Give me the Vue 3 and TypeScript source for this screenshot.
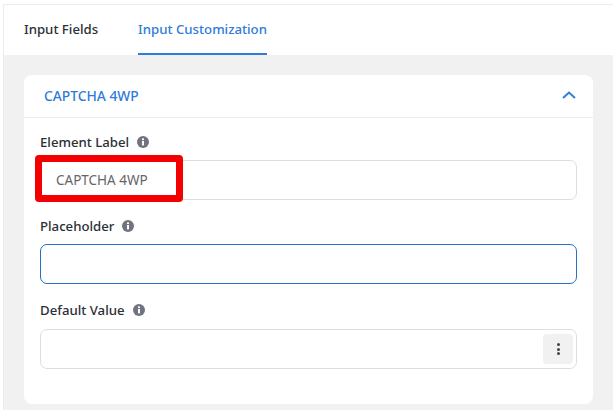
<script setup lang="ts">
interface Field {
  label: string
  value: string
  focused?: boolean
  menu?: boolean
}

const fields: Field[] = [
  { label: 'Element Label', value: 'CAPTCHA 4WP' },
  { label: 'Placeholder', value: '', focused: true },
  { label: 'Default Value', value: '', menu: true },
]
</script>

<template>
  <div class="page">
    <div class="tabs">
      <div class="tab">Input Fields</div>
      <div class="tab active">Input Customization</div>
    </div>
    <div class="content">
      <section class="card">
        <header class="card-head">
          <span class="card-title">CAPTCHA 4WP</span>
          <svg class="chevron" width="14" height="8" viewBox="0 0 14 8" fill="none">
            <path d="M1 7 L7 1.5 L13 7" stroke="#2f7bd9" stroke-width="1.9" />
          </svg>
        </header>
        <div class="card-body">
          <div v-for="f in fields" :key="f.label" class="field">
            <div class="label">
              <span>{{ f.label }}</span>
              <svg class="info" width="12" height="12" viewBox="0 0 12 12">
                <circle cx="6" cy="6" r="6" fill="#6f7480" />
                <rect x="5" y="5" width="2" height="4.4" fill="#fff" />
                <rect x="5" y="2.4" width="2" height="1.7" fill="#fff" />
              </svg>
            </div>
            <div class="input" :class="{ focused: f.focused }">
              <span class="value">{{ f.value }}</span>
              <button v-if="f.menu" class="menu" type="button" aria-label="More">
                <i></i><i></i><i></i>
              </button>
            </div>
          </div>
        </div>
      </section>
    </div>
    <div class="highlight"></div>
  </div>
</template>

<style>
html, body { margin: 0; background: #fff; }
</style>

<style scoped>
.page {
  position: relative;
  width: 613px;
  height: 410px;
  overflow: hidden;
  box-sizing: border-box;
  padding: 4px 0 0 3px;
  display: flex;
  flex-direction: column;
  font-family: "Noto Sans", "Open Sans", sans-serif;
  background: #fff;
}
.tabs {
  flex: none;
  height: 51px;
  box-sizing: border-box;
  display: flex;
  gap: 40px;
  padding-left: 20px;
  background: #fff;
  border-top: 1px solid #ececec;
  border-left: 1px solid #ececec;
}
.tab {
  height: 50px;
  box-sizing: border-box;
  padding-top: 14px;
  font-size: 13.2px;
  line-height: 20px;
  font-weight: 500;
  color: #2b2f36;
}
.tab.active {
  color: #2f7bd9;
  border-bottom: 2px solid #2f7bd9;
}
.content {
  flex: 1;
  background: #f1f1f1;
  padding: 20px;
  padding-bottom: 6px;
  border-left: 1px solid #ececec;
  display: flex;
}
.card {
  flex: 1;
  background: #fff;
  border-radius: 8px;
  display: flex;
  flex-direction: column;
}
.card-head {
  flex: none;
  height: 43px;
  box-sizing: border-box;
  padding: 0 17px 2px 20px;
  display: flex;
  align-items: center;
  justify-content: space-between;
  border-bottom: 1px solid #ececec;
}
.card-title {
  font-size: 13.8px;
  font-weight: 500;
  color: #2f7bd9;
}
.card-body {
  padding: 14px 16px 0;
  display: flex;
  flex-direction: column;
  gap: 16px;
}
.label {
  height: 20px;
  display: flex;
  align-items: center;
  gap: 8px;
  font-size: 13.2px;
  font-weight: 500;
  color: #2b2f36;
  margin-bottom: 8px;
}
.field:last-child .label {
  margin-bottom: 9px;
}
.input {
  height: 40px;
  box-sizing: border-box;
  border: 1px solid #dedede;
  border-radius: 7px;
  background: #fff;
  padding: 0 3px 0 15px;
  display: flex;
  align-items: center;
  justify-content: space-between;
}
.input.focused {
  border-color: #2272c3;
}
.value {
  font-size: 13.5px;
  color: #666;
}
.menu {
  width: 30px;
  height: 30px;
  border: 0;
  padding: 0;
  border-radius: 4px;
  background: #f1f1f1;
  display: flex;
  flex-direction: column;
  align-items: center;
  justify-content: center;
  gap: 1.5px;
}
.menu i {
  width: 3px;
  height: 3px;
  border-radius: 50%;
  background: #3d4350;
}
.highlight {
  position: absolute;
  left: 35px;
  top: 155px;
  width: 148px;
  height: 47px;
  box-sizing: border-box;
  border: 7px solid #f50000;
  border-radius: 4px;
}
</style>
